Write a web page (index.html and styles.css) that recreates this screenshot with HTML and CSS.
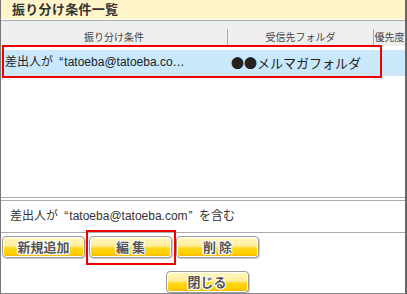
FILE: index.html
```html
<!DOCTYPE html>
<html lang="ja">

<head>
  <meta charset="UTF-8">
  <title>振り分け条件一覧</title>
  <link rel="stylesheet" href="styles.css">
</head>

<body>
  <div class="panel">
    <div class="title">振り分け条件一覧</div>

    <div class="list">
      <div class="list-head">
        <div class="col col-cond">振り分け条件</div>
        <div class="col col-folder">受信先フォルダ</div>
        <div class="col col-prio">優先度</div>
      </div>

      <div class="rule-row">
        <div class="rule-inner">
          <div class="col col-cond">差出人が <span class="q-open">“</span>tatoeba@tatoeba.co…</div>
          <div class="col col-folder">●●メルマガフォルダ</div>
          <div class="col col-prio"></div>
        </div>
      </div>
      <div class="mark mark-row"></div>
    </div>

    <div class="divider"></div>
    <div class="summary">差出人が <span class="q-open">“</span>tatoeba@tatoeba.com<span class="q-close">”</span> を含む</div>

    <div class="actions">
      <button class="btn">新規追加</button>
      <button class="btn">編 集</button>
      <button class="btn">削 除</button>
      <div class="mark mark-edit"></div>
    </div>

    <div class="close-row">
      <button class="btn">閉じる</button>
    </div>
  </div>
</body>

</html>
```

FILE: styles.css
```css
body {
  margin: 0;
  font-family: "Liberation Sans", "Noto Sans CJK JP", sans-serif;
  color: #333;
  background: #fff;
}

.q-open {
  padding-left: 3px;
  padding-right: 1px;
}

.q-close {
  padding-left: 1px;
  padding-right: 3px;
}

.panel {
  position: relative;
  box-sizing: border-box;
  width: 407px;
  height: 294px;
  border-left: 1px solid #777;
  border-right: 2px solid #666;
  border-bottom: 1px solid #888;
  overflow: hidden;
  display: flex;
  flex-direction: column;
}

.title {
  height: 19px;
  line-height: 20px;
  padding-left: 11px;
  margin-bottom: 1px;
  background: #fff5c8;
  font-size: 13px;
  font-weight: bold;
  letter-spacing: 0.3px;
  color: #333;
}

.list {
  position: relative;
  flex: 1;
}

.list-head {
  display: flex;
  border-top: 1px solid #aaa;
  padding-top: 8px;
  background: #efefef;
  font-size: 10px;
  color: #444;
}

.list-head .col {
  height: 17px;
  line-height: 17px;
  text-align: center;
}

.col-cond {
  width: 226px;
}

.col-folder {
  width: 146px;
}

.col-prio {
  flex: 1;
  white-space: nowrap;
  overflow: hidden;
}

.list-head .col-folder,
.list-head .col-prio {
  border-left: 1px solid #aaa;
}

.list-head .col-folder {
  width: 145px;
}

.rule-row {
  margin-top: 4px;
  padding-bottom: 2px;
  background: #c9e8fc;
}

.rule-inner {
  display: flex;
  height: 23px;
  line-height: 25px;
  border-bottom: 1px dashed #ddd;
  font-size: 12px;
  color: #222;
}

.rule-inner .col-cond {
  padding-left: 4px;
  box-sizing: border-box;
  white-space: nowrap;
}

.rule-inner .col-folder {
  padding-left: 4px;
  box-sizing: border-box;
  font-family: "Noto Sans CJK JP", sans-serif;
  font-size: 13px;
}

.mark {
  position: absolute;
  border: 2px solid #e00;
  box-sizing: border-box;
}

.mark-row {
  left: 1px;
  top: 25px;
  width: 380px;
  height: 33px;
}

.divider {
  height: 2px;
  border-top: 1px solid #aaa;
  border-bottom: 1px solid #aaa;
}

.summary {
  height: 31px;
  line-height: 31px;
  padding-left: 9px;
  border-bottom: 1px solid #aaa;
  font-size: 12px;
  color: #333;
}

.actions {
  position: relative;
  display: flex;
  gap: 4px;
  padding: 3px 0 0 1px;
}

.close-row {
  display: flex;
  justify-content: center;
  padding-left: 8px;
  margin-top: 13px;
}

.btn {
  width: 83px;
  height: 22px;
  padding: 0;
  border: 1px solid #9a9a9a;
  border-radius: 4px;
  box-shadow: inset 0 0 0 1px #fff, 1px 1px 0 #ccc;
  background: linear-gradient(#fff6c0 0%, #ffee9a 45%, #ffd81c 55%, #ffd000 80%, #f2b400 100%);
  font-family: "Noto Sans CJK JP", sans-serif;
  font-size: 13px;
  font-weight: bold;
  line-height: 20px;
  color: #555;
  text-shadow: 1px 0 0 #fff, -1px 0 0 #fff, 0 1px 0 #fff, 0 -1px 0 #fff,
    1px 1px 0 #fff, -1px -1px 0 #fff, 1px -1px 0 #fff, -1px 1px 0 #fff;
}

.mark-edit {
  left: 85px;
  top: -3px;
  width: 90px;
  height: 35px;
}
```
